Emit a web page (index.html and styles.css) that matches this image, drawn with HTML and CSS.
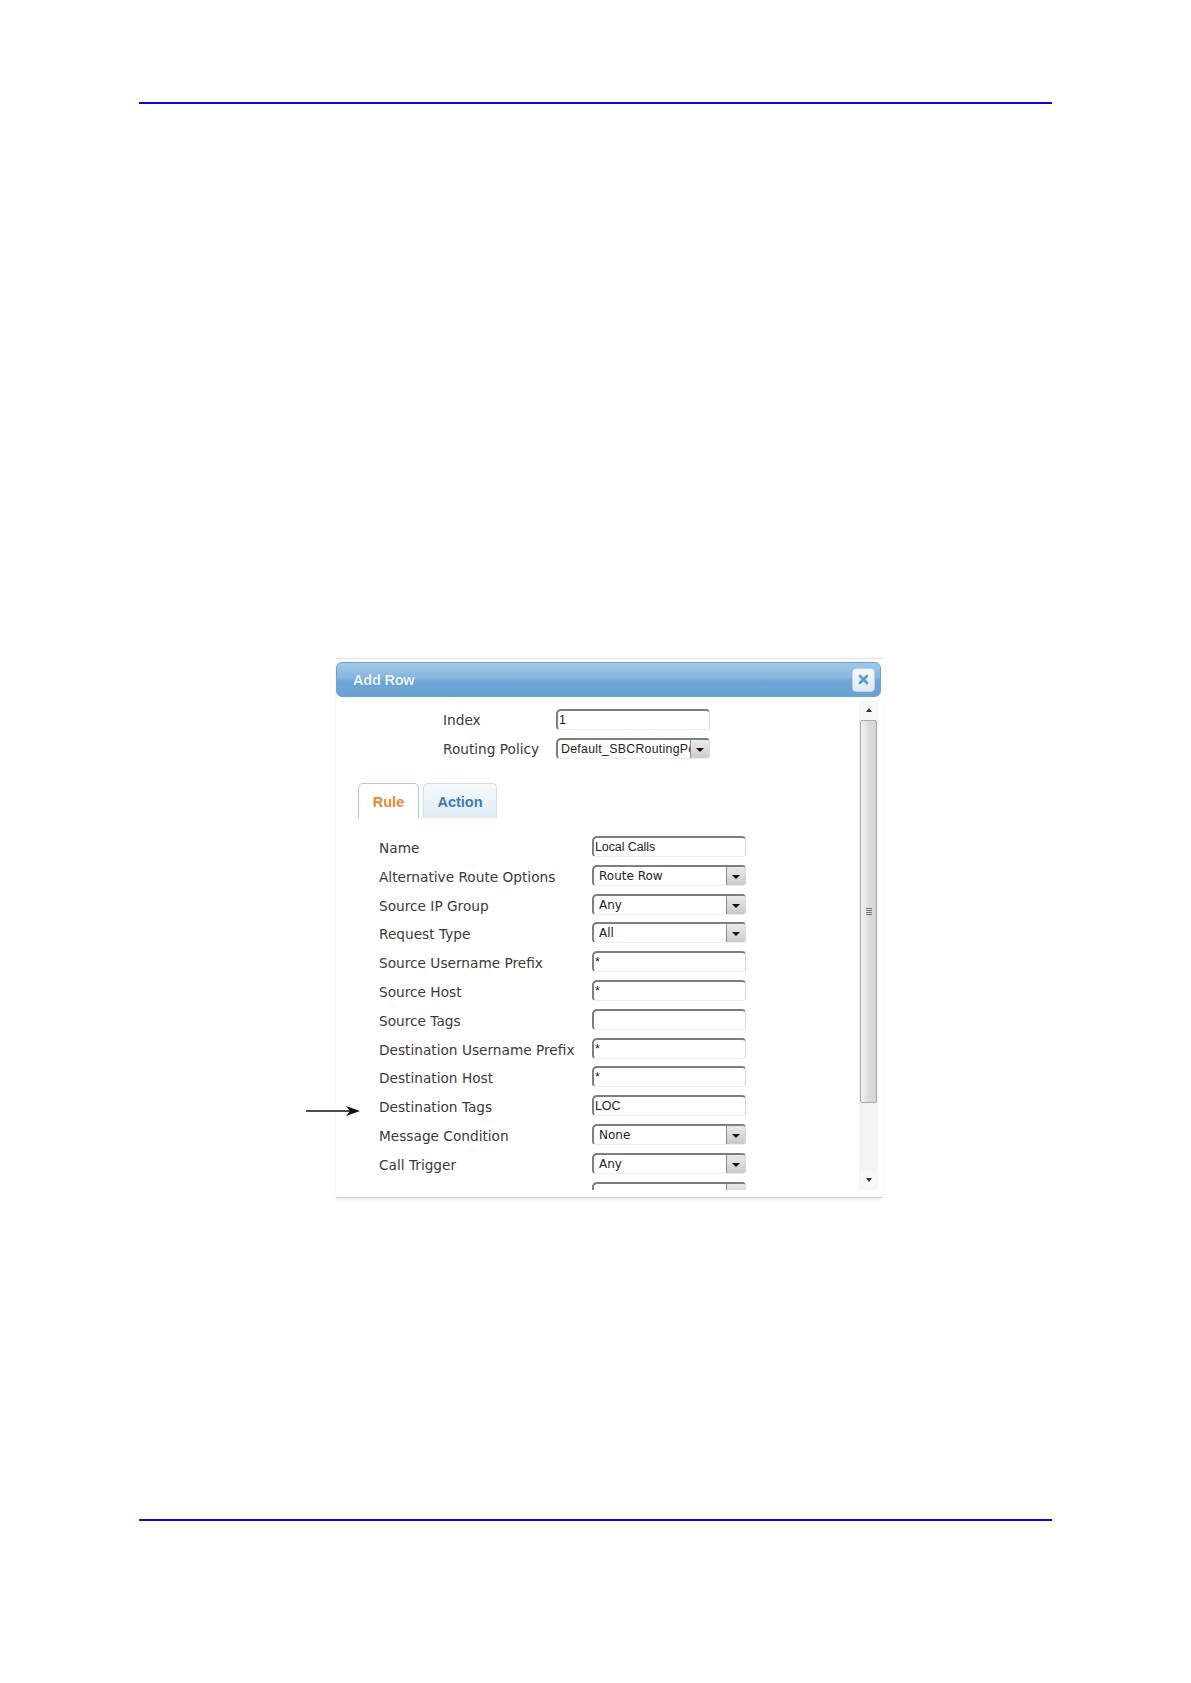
FILE: index.html
```html
<!DOCTYPE html>
<html lang="en">
<head>
<meta charset="utf-8">
<title>Add Row</title>
<link rel="stylesheet" href="styles.css">
</head>
<body>
<div class="page">
  <div class="rule-top"></div>

  <div class="dialog">
    <svg class="pointer" width="54" height="12" viewBox="0 0 54 12" aria-hidden="true">
      <line x1="0" y1="6" x2="46" y2="6" stroke="#111" stroke-width="1.6"/>
      <polygon points="40,1 54,6 40,11 44,6" fill="#111"/>
    </svg>

    <div class="titlebar">
      <span class="title">Add Row</span>
      <span class="close" aria-label="Close">
        <svg width="13" height="13" viewBox="0 0 13 13" aria-hidden="true">
          <path d="M3 3 L10 10 M10 3 L3 10" stroke="#5a96cf" stroke-width="2.6" stroke-linecap="round"/>
        </svg>
      </span>
    </div>

    <div class="body">
      <div class="content">
        <div class="top-fields">
          <span class="tlabel">Index</span>
          <span class="field text tf-index">1</span>
          <span class="tlabel">Routing Policy</span>
          <span class="field select tf-policy"><span class="val narrow">Default_SBCRoutingPolicy</span><span class="btn"><i></i></span></span>
        </div>

        <div class="tabs">
          <span class="tab active">Rule</span>
          <span class="tab">Action</span>
        </div>

        <div class="form">
          <span class="label">Name</span>
          <span class="field text"><span class="val narrow">Local Calls</span></span>

          <span class="label">Alternative Route Options</span>
          <span class="field select"><span class="val">Route Row</span><span class="btn"><i></i></span></span>

          <span class="label">Source IP Group</span>
          <span class="field select"><span class="val">Any</span><span class="btn"><i></i></span></span>

          <span class="label">Request Type</span>
          <span class="field select"><span class="val">All</span><span class="btn"><i></i></span></span>

          <span class="label">Source Username Prefix</span>
          <span class="field text"><span class="val narrow">*</span></span>

          <span class="label">Source Host</span>
          <span class="field text"><span class="val narrow">*</span></span>

          <span class="label">Source Tags</span>
          <span class="field text"><span class="val narrow"></span></span>

          <span class="label">Destination Username Prefix</span>
          <span class="field text"><span class="val narrow">*</span></span>

          <span class="label">Destination Host</span>
          <span class="field text"><span class="val narrow">*</span></span>

          <span class="label">Destination Tags</span>
          <span class="field text"><span class="val narrow">LOC</span></span>

          <span class="label">Message Condition</span>
          <span class="field select"><span class="val">None</span><span class="btn"><i></i></span></span>

          <span class="label">Call Trigger</span>
          <span class="field select"><span class="val">Any</span><span class="btn"><i></i></span></span>

          <span class="label"></span>
          <span class="field select"><span class="val"></span><span class="btn"><i></i></span></span>
        </div>
      </div>

      <div class="scrollbar">
        <span class="arrow up"></span>
        <span class="thumb"><span class="grip"></span></span>
        <span class="track-rest"></span>
        <span class="arrow down"></span>
      </div>
    </div>
  </div>

  <div class="rule-bottom"></div>
</div>
</body>
</html>
```

FILE: styles.css
```css
html, body {
  margin: 0;
  padding: 0;
  background: #ffffff;
}

.page {
  width: 1191px;
  height: 1683px;
  overflow: hidden;
  font-family: "DejaVu Sans", Verdana, sans-serif;
}

.rule-top {
  margin: 102px 0 0 139px;
  width: 913px;
  height: 2px;
  background: #0a0ac8;
}

.rule-bottom {
  margin: 321px 0 0 139px;
  width: 913px;
  height: 2px;
  background: #0a0ac8;
}

/* ---------- dialog ---------- */
.dialog {
  position: relative;
  margin: 554px 0 0 336px;
  width: 547px;
  border-top: 1px solid #dfe5ec;
  padding-top: 3px;
  border-bottom: 1px solid #cfd3d8;
  box-shadow: 0 2px 2px rgba(0, 0, 0, 0.06);
}

.pointer {
  position: absolute;
  left: -30px;
  top: 446px;
}

.titlebar {
  width: 545px;
  height: 35px;
  box-sizing: border-box;
  border: 1px solid #6fa3cf;
  border-radius: 6px;
  background: linear-gradient(to bottom, #a3c9e8 0%, #86b5de 45%, #6da5d6 55%, #69a2d4 100%);
  display: flex;
  align-items: center;
  justify-content: space-between;
  padding: 0 5px 0 16px;
}

.title {
  font-family: "Liberation Sans", Arial, sans-serif;
  font-weight: bold;
  font-size: 14.5px;
  color: #eef5fb;
  letter-spacing: -0.2px;
  text-shadow: 0 0 1px rgba(60, 110, 160, 0.5);
}

.close {
  width: 23px;
  height: 24px;
  box-sizing: border-box;
  border-radius: 4px;
  background: linear-gradient(to bottom, #f4f8fc, #dfeaf4);
  border: 1px solid #b9d2e8;
  display: flex;
  align-items: center;
  justify-content: center;
}

.body {
  display: flex;
  height: 493px;
  padding-bottom: 7px;
  background: #ffffff;
}

.content {
  width: 523px;
  height: 493px;
  overflow: hidden;
}

/* ---------- top fields ---------- */
.top-fields {
  display: grid;
  grid-template-columns: 113px 154px;
  grid-template-rows: 21px 21px;
  row-gap: 8px;
  padding: 12px 0 0 107px;
}

.tlabel {
  font-size: 13.7px;
  color: #3a3a3a;
  line-height: 17px;
  padding-top: 3px;
  white-space: nowrap;
}

/* ---------- tabs ---------- */
.tabs {
  display: flex;
  gap: 4px;
  margin: 24px 0 0 22px;
}

.tab {
  height: 35px;
  box-sizing: border-box;
  border: 1px solid #cfe0ef;
  border-bottom: none;
  border-radius: 5px 5px 0 0;
  background: linear-gradient(to bottom, #f5f9fd, #e1ecf6);
  font-family: "Liberation Sans", Arial, sans-serif;
  font-weight: bold;
  font-size: 14.5px;
  color: #3c7bb8;
  display: flex;
  align-items: center;
  justify-content: center;
  width: 74px;
  padding-top: 1px;
}

.tab.active {
  width: 61px;
  background: #ffffff;
  border-color: #a9c9e6;
  color: #e78a2e;
}

/* ---------- form rows ---------- */
.form {
  display: grid;
  grid-template-columns: 213px 154px;
  grid-auto-rows: 21px;
  row-gap: 7.8px;
  padding: 18px 0 0 43px;
}

.label {
  font-size: 13.7px;
  color: #3a3a3a;
  line-height: 17px;
  padding-top: 4px;
  white-space: nowrap;
}

.field {
  display: flex;
  align-items: center;
  height: 21px;
  box-sizing: border-box;
  border-top: 2px solid #7e7e7e;
  border-left: 2px solid #7e7e7e;
  border-right: 1px solid #d8d8d8;
  border-bottom: 1px solid #ececec;
  border-radius: 5px 4px 3px 4px;
  background: #ffffff;
  overflow: hidden;
  white-space: nowrap;
}

.field.text {
  font-family: "Liberation Sans", Arial, sans-serif;
  font-size: 12.5px;
  color: #222;
  padding-left: 1px;
}

.tf-index {
  font-size: 12.5px;
}

.val {
  flex: 1;
  overflow: hidden;
  font-family: "DejaVu Sans", Verdana, sans-serif;
  font-size: 12px;
  color: #222;
  padding-left: 5px;
  line-height: 16px;
}

.val.narrow {
  font-family: "Liberation Sans", Arial, sans-serif;
  font-size: 12.5px;
  letter-spacing: -0.1px;
  padding-left: 0;
}

.tf-policy .val.narrow {
  padding-left: 3px;
  letter-spacing: 0.3px;
  font-size: 12.3px;
}

.btn {
  flex: none;
  width: 19px;
  height: 19px;
  box-sizing: border-box;
  border-left: 1px solid #8c8c8c;
  background: linear-gradient(to bottom, #ececec, #c9c9c9);
  display: flex;
  align-items: center;
  justify-content: center;
  padding-top: 2px;
}

.btn i {
  width: 0;
  height: 0;
  border-left: 4px solid transparent;
  border-right: 4px solid transparent;
  border-top: 4px solid #111;
}

/* ---------- scrollbar ---------- */
.scrollbar {
  width: 19px;
  height: 490px;
  margin-top: 3px;
  display: flex;
  flex-direction: column;
  background: #f3f3f3;
}

.arrow {
  height: 20px;
  flex: none;
  display: flex;
  align-items: center;
  justify-content: center;
  background: #f7f7f7;
}

.arrow::before {
  content: "";
  width: 0;
  height: 0;
  border-left: 3.5px solid transparent;
  border-right: 3.5px solid transparent;
}

.arrow.up::before {
  border-bottom: 4px solid #333;
}

.arrow.down::before {
  border-top: 4px solid #333;
}

.thumb {
  height: 383px;
  flex: none;
  margin: 0 1px;
  box-sizing: border-box;
  border: 1px solid #a9a9a9;
  border-radius: 2px;
  background: linear-gradient(to right, #f2f2f2, #dedede 50%, #d2d2d2);
  display: flex;
  align-items: center;
  justify-content: center;
}

.grip {
  width: 6px;
  height: 7px;
  background: repeating-linear-gradient(to bottom, #7a7a7a 0, #7a7a7a 1px, transparent 1px, transparent 2px);
}

.track-rest {
  flex: 1;
}
```
